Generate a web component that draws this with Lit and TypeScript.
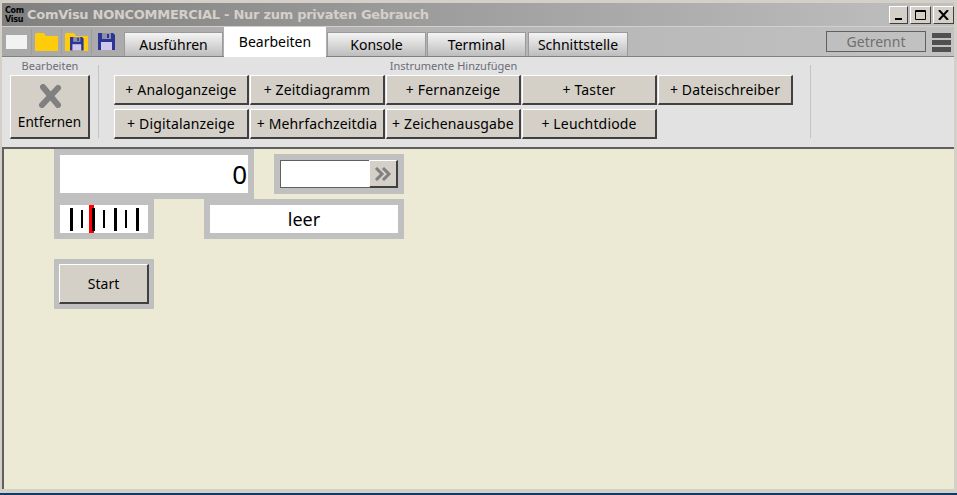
import { LitElement, html, css, svg } from "lit";
import { customElement } from "lit/decorators.js";

const row1 = ["+ Analoganzeige", "+ Zeitdiagramm", "+ Fernanzeige", "+ Taster", "+ Dateischreiber"];
const row2 = ["+ Digitalanzeige", "+ Mehrfachzeitdia", "+ Zeichenausgabe", "+ Leuchtdiode"];
const tabs = ["Ausführen", "Bearbeiten", "Konsole", "Terminal", "Schnittstelle"];
const ticks = [
  { x: 70, w: 3, tall: true }, { x: 81, w: 2, tall: false }, { x: 92, w: 3, tall: true },
  { x: 103, w: 2, tall: false }, { x: 114, w: 3, tall: true }, { x: 125, w: 2, tall: false }, { x: 136, w: 3, tall: true },
];

const disk = svg`<path d="M0 0H15L17 2V17H0Z" fill="#2a3596"/><rect x="4" y="0" width="9" height="6" fill="#8f8fa8"/><rect x="9" y="1" width="2" height="4" fill="#2a3596"/><rect x="3" y="9" width="11" height="8" fill="#cfc8ec"/>`;

@customElement("app-root")
export class AppRoot extends LitElement {
  static styles = css`
    :host { display: block; width: 957px; height: 495px; overflow: hidden; font-family: "Noto Sans", sans-serif; font-size: 14px; color: #000; }
    .window { height: 495px; box-sizing: border-box; display: flex; flex-direction: column; background: #d4d0c8; padding: 3px 3px 0 2px; }
    .title { height: 23px; flex: none; display: flex; align-items: center; background: linear-gradient(90deg, #808080, #c0c0c0); padding-left: 3px; }
    .logo { width: 20px; height: 18px; flex: none; margin-right: 2px; background: #808080; color: #000; font: bold 8px/9px "DejaVu Sans", sans-serif; letter-spacing: -0.3px; overflow: hidden; box-sizing: border-box; }
    .logo span { display: block; }
    .title-text { flex: 1; font: bold 13px "DejaVu Sans", sans-serif; letter-spacing: -0.28px; color: #d4d0c8; white-space: nowrap; }
    .winbtns { display: flex; gap: 2px; }
    .winbtn { width: 21px; height: 18px; box-sizing: border-box; background: #d4d0c8; border: 1px solid; border-color: #fff #404040 #404040 #fff; display: flex; align-items: center; justify-content: center; }
    .winbtn.min { width: 19px; }
    .toolbar { height: 30px; flex: none; margin-top: 1px; display: flex; align-items: flex-end; background: linear-gradient(90deg, #a8a8a8, #c2c2c2); border-bottom: 1px solid #808080; box-sizing: border-box; padding-left: 4px; }
    .tools { display: flex; align-items: center; height: 29px; }
    .sep { width: 1px; height: 26px; background: #9c9c9c; margin: 0 3px; }
    .sep.s1 { margin: 0 3px 0 4px; }
    .sep.s3 { margin: 0 6px 0 3px; }
    .blank { width: 21px; height: 14px; background: #f2f2f2; }
    .icon { display: block; }
    .tabs { display: flex; align-items: flex-end; margin-left: 9px; gap: 1px; }
    .tab { width: 99px; height: 24px; box-sizing: border-box; display: flex; align-items: center; justify-content: center; background: linear-gradient(#f4f4f4, #bdbdbd); border: 1px solid #9a9a9a; border-bottom: none; }
    .tab.active { width: 102px; height: 30px; margin-bottom: -1px; padding-bottom: 1px; background: #fff; border: none; }
    .tab:last-child { width: 100px; margin-left: 1px; }
    .status { margin-left: auto; display: flex; align-items: flex-start; height: 29px; }
    .getrennt { width: 100px; height: 21px; margin-top: 4px; box-sizing: border-box; border: 1px solid #606060; color: #707070; display: flex; align-items: center; justify-content: center; }
    .burger { display: flex; flex-direction: column; gap: 2px; width: 19px; margin: 6px 3px 0 6px; }
    .burger i { display: block; height: 5px; background: #505050; }
    .ribbon { height: 90px; flex: none; box-sizing: border-box; background: #e2e2e2; display: flex; align-items: flex-start; padding: 8px 0 0 8px; }
    .group { display: flex; flex-direction: column; align-items: center; }
    .group-label { font-size: 11px; line-height: 11px; color: #6c6c78; height: 11px; margin-top: -5px; white-space: nowrap; padding-bottom: 4px; }
    .rsep { width: 1px; height: 73px; background: #c4c4c4; flex: none; }
    .rsep.first { margin: 0 15px 0 8px; }
    .rsep.last { margin-left: 17px; }
    .btn { box-sizing: border-box; background: #d4d0c8; border: 1px solid; border-color: #fff #404040 #404040 #fff; border-width: 1px 2px 2px 1px; display: flex; align-items: center; justify-content: center; white-space: nowrap; color: #000; }
    .remove { width: 80px; height: 64px; flex-direction: column; gap: 4px; padding-top: 2px; font-size: 13.6px; }
    .grid { display: grid; grid-template-columns: repeat(5, 135px); grid-auto-rows: 30px; column-gap: 1px; row-gap: 4px; letter-spacing: 0.16px; }
    .canvas { flex: 1; position: relative; background: #ecead4; border-left: 2px solid #606060; border-top: 2px solid #606060; }
    .foot { height: 4px; flex: none; }
    .blue { height: 2px; background: #103a68; flex: none; margin: 0 -3px 0 -2px; }
    .w { position: absolute; background: #c0c0c0; box-sizing: border-box; padding: 6px; display: flex; }
    .w-value { left: 50px; top: 0; width: 200px; height: 50px; }
    .w-input { left: 270px; top: 5px; width: 130px; height: 40px; }
    .w-bars { left: 50px; top: 50px; width: 100px; height: 40px; }
    .w-text { left: 200px; top: 50px; width: 200px; height: 40px; }
    .w-start { left: 50px; top: 110px; width: 100px; height: 50px; padding: 5px; }
    .white { flex: 1; background: #fff; display: flex; align-items: center; }
    .val { justify-content: flex-end; font-size: 26px; padding-right: 1px; }
    .leer { justify-content: center; font-size: 18px; }
    .input-box { flex: 1; background: #fff; border: 1px solid #606060; border-right: none; box-sizing: border-box; }
    .go { width: 29px; flex: none; }
    .tick { position: absolute; background: #000; }
    .needle { position: absolute; left: 35px; top: 6px; width: 5px; height: 28px; background: #f00; }
    .over { left: 38px; top: 9px; width: 3px; height: 23px; }
    .w-start .btn { flex: 1; }
  `;

  render() {
    return html`<div class="window">
      <div class="title">
        <div class="logo"><span>Com</span><span>Visu</span></div>
        <div class="title-text">ComVisu NONCOMMERCIAL - Nur zum privaten Gebrauch</div>
        <div class="winbtns">
          <div class="winbtn min"><svg width="10" height="10"><rect x="1" y="8" width="7" height="2" fill="#000"/></svg></div>
          <div class="winbtn"><svg width="13" height="12"><path d="M1.5 1.5H11.5V10.5H1.5Z M1 2.5H12" fill="none" stroke="#000"/></svg></div>
          <div class="winbtn"><svg width="11" height="10"><path d="M1 0L10 10M10 0L1 10" stroke="#000" stroke-width="2"/></svg></div>
        </div>
      </div>
      <div class="toolbar">
        <div class="tools">
          <div class="blank"></div>
          <div class="sep s1"></div>
          <svg class="icon" width="23" height="18"><path d="M0 18V1L1 0H9L11 3H23V18Z" fill="#ffcc0c"/></svg>
          <div class="sep"></div>
          <svg class="icon" width="23" height="18"><path d="M0 18V1L1 0H9L11 3H23V18Z" fill="#ffcc0c"/><g transform="translate(5 4) scale(.8)">${disk}</g></svg>
          <div class="sep s3"></div>
          <svg class="icon" width="17" height="17">${disk}</svg>
        </div>
        <div class="tabs">
          ${tabs.map((t) => html`<div class="tab ${t === "Bearbeiten" ? "active" : ""}">${t}</div>`)}
        </div>
        <div class="status">
          <div class="getrennt">Getrennt</div>
          <div class="burger"><i></i><i></i><i></i></div>
        </div>
      </div>
      <div class="ribbon">
        <div class="group">
          <div class="group-label">Bearbeiten</div>
          <div class="btn remove">
            <svg width="24" height="24" viewBox="0 0 24 24"><path d="M5 3L20 21M20 4L4 21" stroke="#808080" stroke-width="6" stroke-linecap="round" fill="none"/></svg>
            <span>Entfernen</span>
          </div>
        </div>
        <div class="rsep first"></div>
        <div class="group">
          <div class="group-label">Instrumente Hinzufügen</div>
          <div class="grid">
            ${row1.map((t) => html`<div class="btn">${t}</div>`)}
            ${row2.map((t) => html`<div class="btn">${t}</div>`)}
          </div>
        </div>
        <div class="rsep last"></div>
      </div>
      <div class="canvas">
        <div class="w w-value"><div class="white val">0</div></div>
        <div class="w w-input"><div class="input-box"></div>
          <div class="btn go"><svg width="20" height="14"><path d="M3 1L9 7L3 13M10 1L16 7L10 13" fill="none" stroke="#808080" stroke-width="3"/></svg></div></div>
        <div class="w w-bars"><div class="white"></div>
          ${ticks.map((k) => html`<div class="tick" style="left:${k.x - 54}px;top:${k.tall ? 9 : 11}px;width:${k.w}px;height:${k.tall ? 23 : 18}px"></div>`)}
          <div class="needle"></div>
          <div class="tick over"></div>
        </div>
        <div class="w w-text"><div class="white leer">leer</div></div>
        <div class="w w-start"><div class="btn">Start</div></div>
      </div>
      <div class="foot"></div>
      <div class="blue"></div>
    </div>`;
  }
}
